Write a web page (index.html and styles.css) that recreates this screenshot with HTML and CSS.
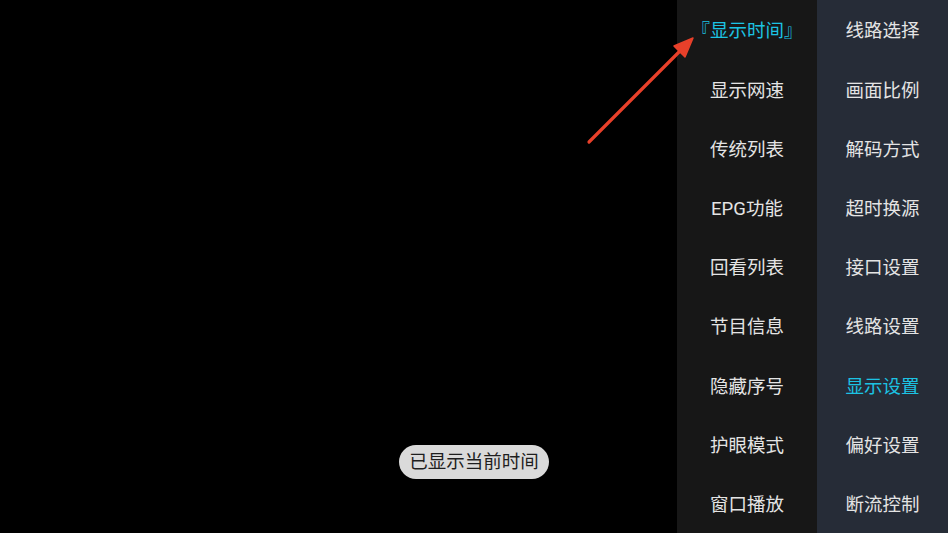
FILE: index.html
```html
<!DOCTYPE html>
<html lang="zh">
<head>
<meta charset="utf-8">
<link rel="stylesheet" href="styles.css">
</head>
<body>
<div class="screen">
  <div class="video"></div>
  <div class="menu sub">
    <div class="item active">『显示时间』</div>
    <div class="item">显示网速</div>
    <div class="item">传统列表</div>
    <div class="item">EPG功能</div>
    <div class="item">回看列表</div>
    <div class="item">节目信息</div>
    <div class="item">隐藏序号</div>
    <div class="item">护眼模式</div>
    <div class="item">窗口播放</div>
  </div>
  <div class="menu main">
    <div class="item">线路选择</div>
    <div class="item">画面比例</div>
    <div class="item">解码方式</div>
    <div class="item">超时换源</div>
    <div class="item">接口设置</div>
    <div class="item">线路设置</div>
    <div class="item active">显示设置</div>
    <div class="item">偏好设置</div>
    <div class="item">断流控制</div>
  </div>
  <svg class="arrow" width="948" height="533" viewBox="0 0 948 533">
    <line x1="589" y1="142" x2="684" y2="47" stroke="#e8402a" stroke-width="3.2" stroke-linecap="round"/>
    <polygon points="693,38 685,57 674,46" fill="#e8402a" stroke="#e8402a" stroke-width="1.5" stroke-linejoin="round"/>
  </svg>
  <div class="toast">已显示当前时间</div>
</div>
</body>
</html>
```
FILE: styles.css
```css
html, body {
  margin: 0;
  padding: 0;
  background: #000;
}
.screen {
  position: relative;
  width: 948px;
  height: 533px;
  display: flex;
  overflow: hidden;
  font-family: Roboto, "Noto Sans CJK SC", "Noto Sans", sans-serif;
}
.video {
  flex: 1;
  background: #000;
}
.menu {
  display: flex;
  flex-direction: column;
  height: 533px;
}
.sub {
  width: 140px;
  background: #171717;
}
.main {
  width: 131px;
  background: #262c37;
}
.item {
  flex: 1;
  display: flex;
  align-items: center;
  justify-content: center;
  color: #e4e4e4;
  font-size: 18.5px;
  line-height: 1;
  padding-top: 4px;
  white-space: nowrap;
}
.item.active {
  color: #1cc3e3;
}
.arrow {
  position: absolute;
  left: 0;
  top: 0;
}
.toast {
  position: absolute;
  left: 399px;
  top: 445px;
  width: 150px;
  height: 34px;
  border-radius: 17px;
  background: #dadada;
  color: #1e1e1e;
  font-size: 18.5px;
  line-height: 1;
  display: flex;
  align-items: center;
  justify-content: center;
}
```
